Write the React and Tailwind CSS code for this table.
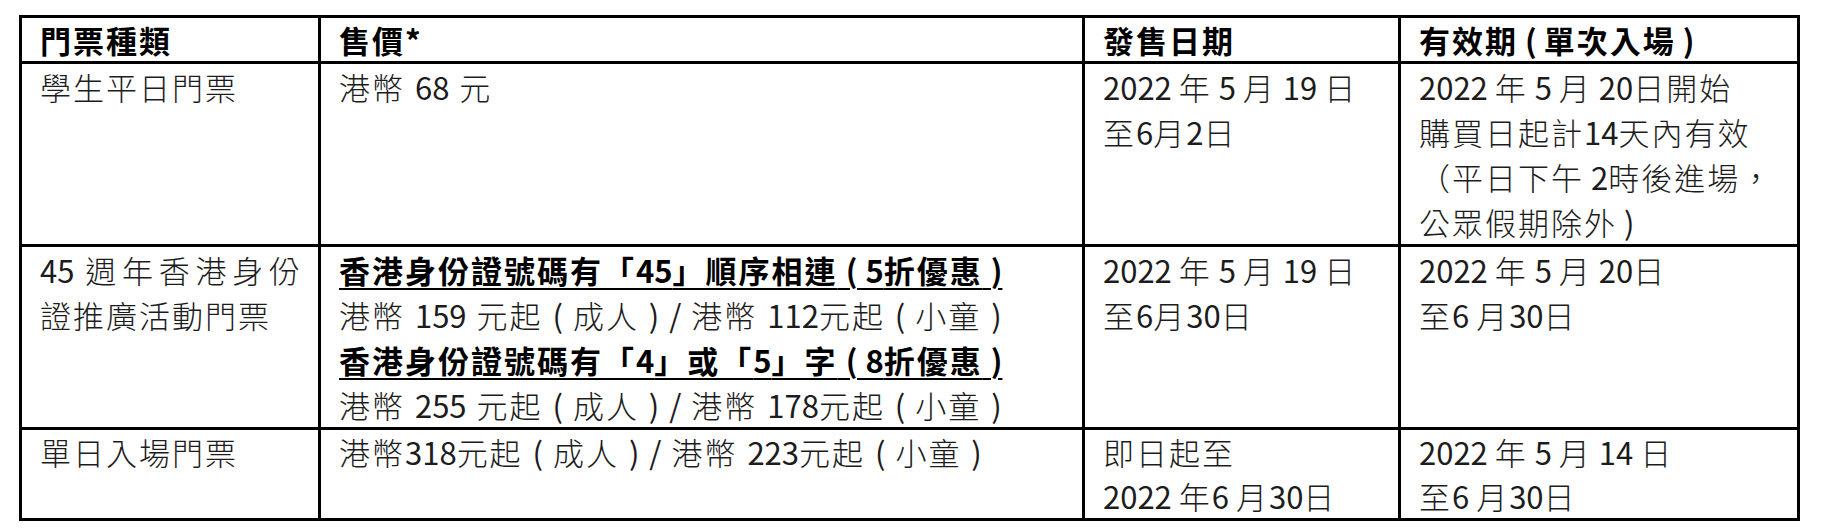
import React from "react";

// ASCII runs (digits, spaces, brackets) keep normal tracking, CJK gets wider
const Txt = ({ text, latin = "" }) =>
  text.split(/([\x20-\x7e]+)/).map((part, i) =>
    i % 2 ? (
      <span key={i} className={`tracking-normal ${latin}`}>
        {part}
      </span>
    ) : (
      part
    )
  );

const Lines = ({ lines }) => (
  <>
    {lines.map((line, i) =>
      typeof line === "string" ? (
        <div key={i} className="whitespace-nowrap">
          <Txt text={line} latin="font-normal" />
        </div>
      ) : (
        <div key={i} className={line.className}>
          <Txt text={line.text} latin={line.bold ? "" : "font-normal"} />
        </div>
      )
    )}
  </>
);

const bold =
  "whitespace-nowrap font-bold text-black underline decoration-2 underline-offset-[5px] [word-spacing:1px]";
const price = "whitespace-nowrap [word-spacing:3px]";

const rows = [
  {
    type: ["學生平日門票"],
    price: [{ text: "港幣 68 元", className: price }],
    sale: ["2022 年 5 月 19 日", "至6月2日"],
    valid: [
      "2022 年 5 月 20日開始",
      "購買日起計14天內有效",
      "（平日下午 2時後進場，",
      "公眾假期除外 )",
    ],
  },
  {
    type: [
      { text: "45 週年香港身份", className: "whitespace-nowrap [text-align-last:justify]" },
      "證推廣活動門票",
    ],
    price: [
      { text: "香港身份證號碼有「45」順序相連 ( 5折優惠 )", className: bold, bold: true },
      { text: "港幣 159 元起 ( 成人 ) / 港幣 112元起 ( 小童 )", className: price },
      { text: "香港身份證號碼有「4」或「5」字 ( 8折優惠 )", className: bold, bold: true },
      { text: "港幣 255 元起 ( 成人 ) / 港幣 178元起 ( 小童 )", className: price },
    ],
    sale: ["2022 年 5 月 19 日", "至6月30日"],
    valid: ["2022 年 5 月 20日", "至6 月30日"],
  },
  {
    type: ["單日入場門票"],
    price: [{ text: "港幣318元起 ( 成人 ) / 港幣 223元起  ( 小童 )", className: price }],
    sale: ["即日起至", "2022 年6 月30日"],
    valid: ["2022 年 5 月 14 日", "至6 月30日"],
    lead: "leading-[44px]",
  },
];

const headers = ["門票種類", "售價*", "發售日期", "有效期 ( 單次入場 )"];

export default function App() {
  return (
    <div className="min-h-[531px] bg-white pt-[15px] pl-[19px] font-['Noto_Sans_CJK_TC',sans-serif] text-[31px] tracking-[2px] text-[#1c1c1c]">
      <table className="w-[1781px] table-fixed border-collapse border-[3px] border-black">
        <colgroup>
          <col className="w-[299px]" />
          <col className="w-[764px]" />
          <col className="w-[316px]" />
          <col className="w-[399px]" />
        </colgroup>
        <thead>
          <tr>
            {headers.map((h) => (
              <th
                key={h}
                className="border-[3px] border-black pl-[18px] pr-2 text-left align-top font-bold leading-[43px] text-black whitespace-nowrap"
              >
                <Txt text={h} />
              </th>
            ))}
          </tr>
        </thead>
        <tbody className="font-light leading-[45px]">
          {rows.map((r, i) => (
            <tr key={i} className={r.lead || ""}>
              {[r.type, r.price, r.sale, r.valid].map((cell, j) => (
                <td key={j} className="border-[3px] border-black pl-[18px] pr-4 align-top">
                  <Lines lines={cell} />
                </td>
              ))}
            </tr>
          ))}
        </tbody>
      </table>
    </div>
  );
}
